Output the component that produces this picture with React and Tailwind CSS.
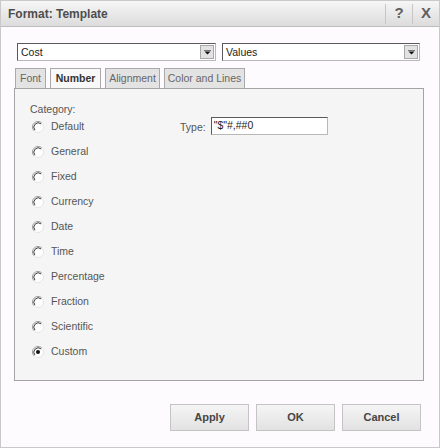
import React from 'react';

const categories = [
  'Default',
  'General',
  'Fixed',
  'Currency',
  'Date',
  'Time',
  'Percentage',
  'Fraction',
  'Scientific',
  'Custom',
];

function Radio({ checked }) {
  return (
    <svg width="12" height="12" viewBox="0 0 12 12" className="shrink-0">
      <circle cx="6" cy="6" r="5.5" fill="#ffffff" />
      <path d="M2.1 9.9 A5.5 5.5 0 0 1 9.9 2.1" fill="none" stroke="#9a9a9a" strokeWidth="1" />
      <path d="M2.9 9.1 A4.4 4.4 0 0 1 9.1 2.9" fill="none" stroke="#3c3c3c" strokeWidth="1" />
      <path d="M9.9 2.1 A5.5 5.5 0 0 1 2.1 9.9" fill="none" stroke="#e4e4e4" strokeWidth="1" />
      {checked && <circle cx="6" cy="6" r="2" fill="#111111" />}
    </svg>
  );
}

function Select({ value, width }) {
  return (
    <div
      className={`${width} h-[18px] flex items-center bg-white border border-t-[#5a5a5a] border-l-[#5a5a5a] border-r-[#b8b8b8] border-b-[#b8b8b8]`}
    >
      <span className="flex-1 pl-[3px] text-[10.5px] text-[#222] leading-none">{value}</span>
      <div className="w-[14px] h-[14px] mr-[1px] flex items-center justify-center bg-[#e2e2e2] border border-[#a8a8a8]">
        <svg width="7" height="5" viewBox="0 0 7 5">
          <rect x="0" y="0" width="7" height="1" fill="#777" />
          <path d="M0.5 1.5 L6.5 1.5 L3.5 4.5 Z" fill="#111" />
        </svg>
      </div>
    </div>
  );
}

function Tab({ label, active, width }) {
  return (
    <div
      className={`${width} h-[20px] flex items-center justify-center border border-b-0 border-[#a9a9a9] text-[10.5px] whitespace-nowrap ${
        active ? 'bg-[#f8f8f8] font-bold text-[#333]' : 'bg-[#e3e3e3] text-[#666]'
      }`}
    >
      {label}
    </div>
  );
}

export default function App() {
  return (
    <div
      className="w-[440px] h-[448px] flex flex-col bg-[#fdfbfd] border border-[#c9c9c9]"
      style={{ fontFamily: '"Liberation Sans", Arial, sans-serif' }}
    >
      {/* title bar */}
      <div className="h-[26px] flex items-center bg-gradient-to-b from-[#f6f6f6] to-[#dcdcdc] border-b border-[#bdbdbd]">
        <span className="flex-1 pl-[7px] text-[12px] font-bold text-[#4d4d4d]">Format: Template</span>
        <div className="h-full flex items-center">
          <div className="w-px h-[20px] bg-[#c6c6c6]" />
          <span className="w-[26px] text-center text-[15px] font-bold text-[#606060]">?</span>
          <div className="w-px h-[20px] bg-[#c6c6c6]" />
          <span className="w-[26px] text-center text-[15px] font-bold text-[#606060]">X</span>
        </div>
      </div>

      {/* body */}
      <div className="flex flex-col pt-[16px]">
        <div className="flex gap-[6px] pl-[16px]">
          <Select value="Cost" width="w-[199px]" />
          <Select value="Values" width="w-[198px]" />
        </div>

        <div className="flex gap-[4px] pl-[14px] mt-[7px]">
          <Tab label="Font" width="w-[31px]" />
          <Tab label="Number" width="w-[51px]" active />
          <Tab label="Alignment" width="w-[55px]" />
          <Tab label="Color and Lines" width="w-[81px]" />
        </div>

        <div className="ml-[13px] w-[410px] h-[293px] flex bg-[#f5f5f5] border border-[#a4a4a4] text-[10.5px] text-[#555]">
          <div className="w-[150px] flex flex-col pl-[15px] pt-[13px]">
            <span className="leading-[14px]">Category:</span>
            <div className="flex flex-col pl-[2px] -mt-[2px]">
              {categories.map((c) => (
                <div key={c} className="h-[25px] flex items-center gap-[7px]">
                  <Radio checked={c === 'Custom'} />
                  <span>{c}</span>
                </div>
              ))}
            </div>
          </div>
          <div className="flex items-start pl-[15px] pt-[28px]">
            <span className="mt-[3px] mr-[5px]">Type:</span>
            <div className="w-[117px] h-[18px] flex items-center pl-[2px] bg-white border border-t-[#5a5a5a] border-l-[#5a5a5a] border-r-[#b8b8b8] border-b-[#b8b8b8] text-[#222]">
              "$"#,##0
            </div>
          </div>
        </div>

        <div className="flex justify-end gap-[7px] pr-[18px] mt-[23px]">
          {['Apply', 'OK', 'Cancel'].map((b) => (
            <button
              key={b}
              className="w-[79px] h-[27px] bg-gradient-to-b from-[#f5f5f5] to-[#e2e2e2] border border-[#c4c4c4] text-[11px] font-bold text-[#454545]"
            >
              {b}
            </button>
          ))}
        </div>
      </div>
    </div>
  );
}
